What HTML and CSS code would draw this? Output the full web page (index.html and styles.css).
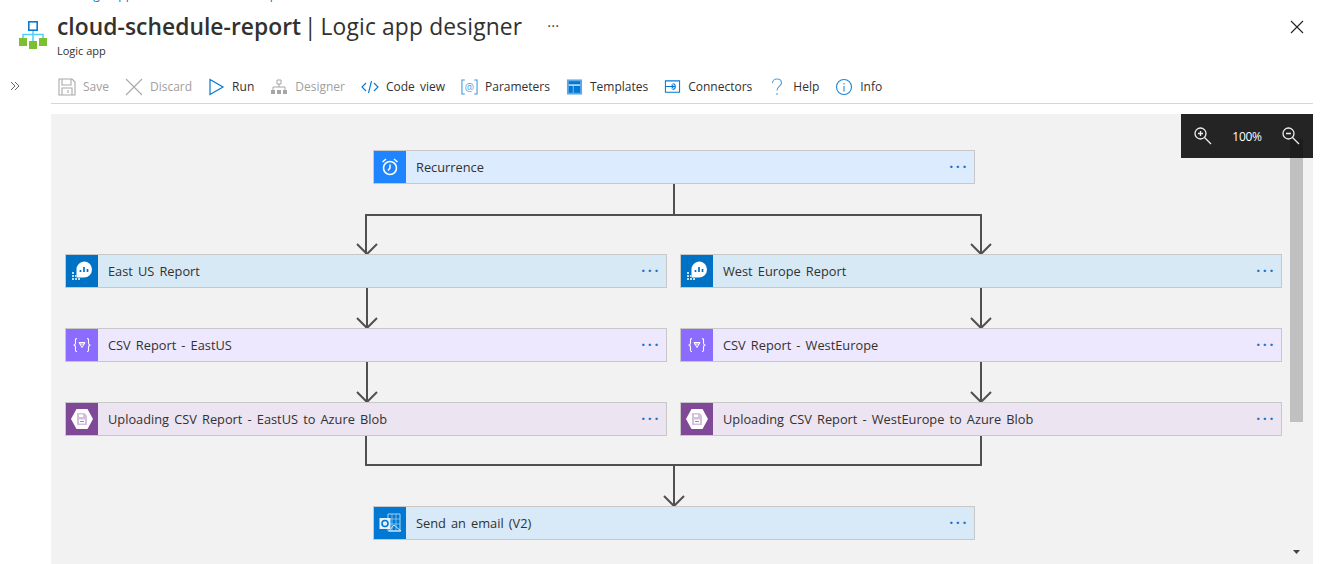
FILE: index.html
```html
<!DOCTYPE html>
<html lang="en">
<head>
<meta charset="utf-8">
<title>cloud-schedule-report | Logic app designer</title>
<link rel="stylesheet" href="styles.css">
</head>
<body>
<div class="crumbs"><div class="crumb-inner"><span>Home</span><span>&gt;</span><span>Logic apps</span><span>&gt;</span><span>cloud-schedule-report</span></div></div>
<header class="head">
  <svg class="app-icon" width="30" height="32" viewBox="0 0 30 32">
    <rect x="10.800" y="3.800" width="8.400" height="8.400" fill="none" stroke="#0b78cf" stroke-width="1.600"/>
    <path d="M15 13v10M5 20v-3.500h20V20" fill="none" stroke="#4fd0f7" stroke-width="1.500"/>
    <rect x="1" y="20" width="8" height="8" fill="#7cbf2f"/>
    <rect x="11" y="23" width="8" height="8" fill="#7cbf2f"/>
    <rect x="21" y="20" width="8" height="8" fill="#7cbf2f"/>
  </svg>
  <div class="head-text">
    <h1 class="title"><b class="title-name">cloud-schedule-report</b> <span class="title-bar">|</span> <span class="title-rest">Logic app designer</span></h1>
    <div class="subtitle">Logic app</div>
  </div>
  <span class="more">···</span>
  <svg class="close" width="14" height="14" viewBox="0 0 14 14"><path d="M1 1l12 12M13 1L1 13" stroke="#222" stroke-width="1.100" fill="none"/></svg>
</header>
<main class="main">
  <aside class="rail">
    <svg width="10" height="10" viewBox="0 0 10 10"><path d="M1 1l4 4-4 4M5 1l4 4-4 4" stroke="#666" fill="none"/></svg>
  </aside>
  <div class="content">
    <nav class="toolbar">
      <span class="tool off"><svg class="ico" viewBox="0 0 18 18"><path d="M1 1h13l3 3v13H1zM4 1v6h9V1M4 17v-7h10v7M10 12v3" fill="none" stroke="#aaa" stroke-width="1.100"/></svg>Save</span>
      <span class="tool off"><svg class="ico" viewBox="0 0 18 18"><path d="M1 1l16 16M17 1L1 17" fill="none" stroke="#aaa" stroke-width="1.100"/></svg>Discard</span>
      <span class="tool"><svg class="ico ico-s" viewBox="0 0 17 18"><path d="M2 1.500l13 7.500-13 7.500z" fill="none" stroke="#0078d4" stroke-width="1.200"/></svg>Run</span>
      <span class="tool off"><svg class="ico" viewBox="0 0 18 18"><path d="M7 2h4v4H7zM9 6v3M3 12V9h12v3" fill="none" stroke="#a6a6a6"/><path d="M1 12h4v4H1zM7 12h4v4H7zM13 12h4v4h-4z" fill="#a6a6a6"/></svg>Designer</span>
      <span class="tool"><svg class="ico" viewBox="0 0 18 18"><path d="M5 5L1 9l4 4M13 5l4 4-4 4M10.500 3L7.500 15" fill="none" stroke="#0078d4" stroke-width="1.100"/></svg>Code view</span>
      <span class="tool"><svg class="ico ico-s" viewBox="0 0 18 18"><path d="M4 1.500H1v15h3M14 1.500h3v15h-3" fill="none" stroke="#3a94dc" stroke-width="1.100"/><text class="at" x="9" y="13">@</text></svg>Parameters</span>
      <span class="tool"><svg class="ico ico-s" viewBox="0 0 18 18"><rect x="1" y="1" width="16" height="16" fill="#5ea9e4"/><path d="M3 3h12v3H3zM3 7.500h4V15H3zM8.500 7.500H15V15H8.500z" fill="#0078d4"/><path d="M3 7h12" stroke="#fff"/></svg>Templates</span>
      <span class="tool"><svg class="ico ico-s" viewBox="0 0 18 18"><path d="M1.500 2.500h15v12h-15zM1.500 8.500h4M12.500 8.500h-8M9 5.500a3 3 0 0 1 0 6M10 8.500l-2-2M10 8.500l-2 2" fill="none" stroke="#0078d4" stroke-width="1.100"/></svg>Connectors</span>
      <span class="tool"><svg class="ico" viewBox="0 0 18 18"><path d="M4.500 5C4.500 2.500 6.500 1 9 1s4.500 1.500 4.500 4C13.500 8 9 8.500 9 12.500M9 15v2" fill="none" stroke="#4a9fe0" stroke-width="1.100"/></svg>Help</span>
      <span class="tool"><svg class="ico" viewBox="0 0 18 18"><circle cx="9" cy="9" r="7.500" fill="none" stroke="#1a85d8" stroke-width="1.100"/><path d="M9 8v5.500M9 5v1.500" stroke="#4a9fe0" stroke-width="1.300" fill="none"/></svg>Info</span>
    </nav>
    <section class="canvas">
      <svg class="wires" width="1262" height="450" viewBox="0 0 1262 450">
        <g fill="none" stroke="#505050" stroke-width="2">
          <path d="M623 70v31M315 140v-39h615v39"/>
          <path d="M306 130l10 10 10-10M920 130l10 10 10-10"/>
          <path d="M316 174v40M930 174v40M306 204l10 10 10-10M920 204l10 10 10-10"/>
          <path d="M316 248v40M930 248v40M306 278l10 10 10-10M920 278l10 10 10-10"/>
          <path d="M315 322v29h615v-29M623 351v41M613 382l10 10 10-10"/>
        </g>
      </svg>

      <div class="node rec col-mid row-0">
        <span class="node-ico"><svg width="20" height="20" viewBox="0 0 20 20"><circle cx="10" cy="11" r="6.500" fill="none" stroke="#fff" stroke-width="1.600"/><path d="M10 7.500V11L8 13.500M2.500 5L6 2M17.500 5L14 2" fill="none" stroke="#fff" stroke-width="1.500"/></svg></span>
        <span class="label">Recurrence</span><span class="dots">···</span>
      </div>

      <div class="node ana col-left row-1">
        <span class="node-ico"><svg width="24" height="24" viewBox="0 0 24 24"><path d="M14 2.500a8 8 0 0 1 0 16H6.500v-8a8 8 0 0 1 7.500-8z" fill="#fff"/><path d="M10.500 13v-2M14 13V8M17.500 13V10" stroke="#0072c6" stroke-width="1.700"/><path d="M2 13h2v2H2zM2 16h2v2H2zM2 19h2v2H2zM5 19h2v2H5zM8 19h2v2H8zM5 16h1.500v2H5z" fill="#bfe0f5"/></svg></span>
        <span class="label">East US Report</span><span class="dots">···</span>
      </div>
      <div class="node ana col-right row-1">
        <span class="node-ico"><svg width="24" height="24" viewBox="0 0 24 24"><path d="M14 2.500a8 8 0 0 1 0 16H6.500v-8a8 8 0 0 1 7.500-8z" fill="#fff"/><path d="M10.500 13v-2M14 13V8M17.500 13V10" stroke="#0072c6" stroke-width="1.700"/><path d="M2 13h2v2H2zM2 16h2v2H2zM2 19h2v2H2zM5 19h2v2H5zM8 19h2v2H8zM5 16h1.500v2H5z" fill="#bfe0f5"/></svg></span>
        <span class="label">West Europe Report</span><span class="dots">···</span>
      </div>

      <div class="node csv col-left row-2">
        <span class="node-ico"><svg width="20" height="20" viewBox="0 0 20 20"><path d="M5 3.500C3 3.500 3.500 5 3.500 7.500S3 10 1.500 10c1.500 0 2 .5 2 2.500s-.5 4 1.500 4M15 3.500c2 0 1.500 1.500 1.500 4s.5 2.500 2 2.500c-1.500 0-2 .5-2 2.500s.5 4-1.500 4" fill="none" stroke="#fff" stroke-width="1.100"/><path d="M7 7.500h6L10 12.500zM7.800 9h4.400" fill="none" stroke="#fff" stroke-width="1"/></svg></span>
        <span class="label">CSV Report - EastUS</span><span class="dots">···</span>
      </div>
      <div class="node csv col-right row-2">
        <span class="node-ico"><svg width="20" height="20" viewBox="0 0 20 20"><path d="M5 3.500C3 3.500 3.500 5 3.500 7.500S3 10 1.500 10c1.500 0 2 .5 2 2.500s-.5 4 1.500 4M15 3.500c2 0 1.500 1.500 1.500 4s.5 2.500 2 2.500c-1.500 0-2 .5-2 2.500s.5 4-1.500 4" fill="none" stroke="#fff" stroke-width="1.100"/><path d="M7 7.500h6L10 12.500zM7.800 9h4.400" fill="none" stroke="#fff" stroke-width="1"/></svg></span>
        <span class="label">CSV Report - WestEurope</span><span class="dots">···</span>
      </div>

      <div class="node blob col-left row-3">
        <span class="node-ico"><svg width="24" height="24" viewBox="0 0 24 24"><path d="M6.500 2h11L23 12l-5.500 10h-11L1 12z" fill="#fff"/><path d="M7 6h7.500L17 8.500V18H7z" fill="#d4c0de"/><path d="M9 7.500h4v2.500H9zM9 12.500h6v4H9z" fill="#fff"/><path d="M10 14.500h4" stroke="#a685b8"/></svg></span>
        <span class="label">Uploading CSV Report - EastUS to Azure Blob</span><span class="dots">···</span>
      </div>
      <div class="node blob col-right row-3">
        <span class="node-ico"><svg width="24" height="24" viewBox="0 0 24 24"><path d="M6.500 2h11L23 12l-5.500 10h-11L1 12z" fill="#fff"/><path d="M7 6h7.500L17 8.500V18H7z" fill="#d4c0de"/><path d="M9 7.500h4v2.500H9zM9 12.500h6v4H9z" fill="#fff"/><path d="M10 14.500h4" stroke="#a685b8"/></svg></span>
        <span class="label">Uploading CSV Report - WestEurope to Azure Blob</span><span class="dots">···</span>
      </div>

      <div class="node mail col-mid row-4">
        <span class="node-ico"><svg width="24" height="24" viewBox="0 0 24 24"><path d="M10 3h12v17H10z" fill="none" stroke="#a9d5f4" stroke-width="1"/><path d="M14 3v17M18 3v17M10 8h12M10 13h12" stroke="#a9d5f4" stroke-width=".7"/><path d="M11 20l5-6 7 6z" fill="none" stroke="#d8ecfa"/><rect x="1.500" y="7" width="11" height="11" fill="#e6f2fb"/><circle cx="7" cy="12.500" r="3" fill="none" stroke="#0078d4" stroke-width="1.600"/></svg></span>
        <span class="label">Send an email (V2)</span><span class="dots">···</span>
      </div>

      <div class="thumb"></div>
      <svg class="down" width="7" height="4" viewBox="0 0 7 4"><path d="M0 0h7L3.500 4z" fill="#444"/></svg>

      <div class="zoombar">
        <svg width="20" height="20" viewBox="0 0 20 20"><circle cx="7.500" cy="7.500" r="5.500" fill="none" stroke="#eee" stroke-width="1.300"/><path d="M11.500 11.500l6.500 6.500M5 7.500h5M7.500 5v5" stroke="#eee" stroke-width="1.300" fill="none"/></svg>
        <span class="pct">100%</span>
        <svg width="20" height="20" viewBox="0 0 20 20"><circle cx="7.500" cy="7.500" r="5.500" fill="none" stroke="#eee" stroke-width="1.300"/><path d="M11.500 11.500l6.500 6.500M5 7.500h5" stroke="#eee" stroke-width="1.300" fill="none"/></svg>
      </div>
    </section>
  </div>
</main>
</body>
</html>
```

FILE: styles.css
```css
* { box-sizing: border-box; }
html, body { margin: 0; height: 100%; overflow: hidden; background: #fff; }
body { font-family: "Open Sans", "Noto Sans", "Liberation Sans", sans-serif; color: #323130; }

.crumbs { height: 3px; overflow: hidden; padding-left: 15px; }
.crumb-inner { display: flex; gap: 12px; margin-top: -12px; font-size: 12px; line-height: 14px; color: #0078d4; white-space: nowrap; }

.head { display: flex; align-items: flex-start; height: 57px; padding-left: 18px; }
.app-icon { margin-top: 15px; flex: none; }
.head-text { margin-left: 9px; margin-top: 8px; }
.title { margin: 0; font-size: 22.800px; line-height: 32px; font-weight: 400; color: #323130; white-space: nowrap; }
.title-name { font-weight: 600; letter-spacing: .05px; margin-right: -3px; }
.title-bar { margin-right: -2px; }
.title-rest { letter-spacing: .16px; }
.subtitle { font-size: 11px; line-height: 14px; margin-top: 1px; color: #323130; }
.more { margin-left: 25px; margin-top: 12px; font-size: 15px; line-height: 20px; color: #444; }
.close { margin-left: auto; margin-right: 24px; margin-top: 17px; }

.main { display: flex; height: 504px; }
.rail { width: 51px; flex: none; padding: 14px 0 0 10px; }
.content { width: 1262px; flex: none; display: flex; flex-direction: column; }

.toolbar { display: flex; align-items: center; gap: 16px; height: 44px; padding: 11px 0 0 7px; border-bottom: 1px solid #d6d6d6; flex: none; }
.tool { display: flex; align-items: center; gap: 7px; font-size: 12px; line-height: 18px; word-spacing: 2px; color: #323130; white-space: nowrap; }
.tool.off { color: #a0a0a0; }
.ico { width: 18px; height: 18px; flex: none; }
.ico-s { width: 17px; }
.at { font-size: 11px; fill: #4a9fe0; text-anchor: middle; font-family: "Open Sans", sans-serif; }

.canvas { position: relative; margin-top: 10px; height: 450px; background: #f2f2f2; overflow: hidden; flex: none; }
.wires { position: absolute; left: 0; top: 0; }

.node { position: absolute; width: 602px; height: 34px; display: flex; align-items: center; border: 1px solid #c8c8c8; }
.col-mid { left: 322px; }
.col-left { left: 14px; }
.col-right { left: 629px; }
.row-0 { top: 36px; }
.row-1 { top: 140px; }
.row-2 { top: 214px; }
.row-3 { top: 288px; }
.row-4 { top: 392px; }
.node-ico { width: 32px; height: 32px; flex: none; display: flex; align-items: center; justify-content: center; }
.label { margin-left: 10px; font-size: 12.800px; word-spacing: 1.800px; color: #323130; white-space: nowrap; flex: 1; }
.dots { margin-right: 5px; font-size: 14px; line-height: 14px; font-weight: 700; letter-spacing: 2.600px; color: #1f72c9; }

.rec { background: #ddebfe; }
.rec .node-ico { background: #1f85ff; }
.ana { background: #d8e9f6; }
.ana .node-ico { background: #0072c6; }
.csv { background: #ede8fe; }
.csv .node-ico { background: #8c6cff; }
.blob { background: #ece4f0; }
.blob .node-ico { background: #804998; }
.mail { background: #d8e9f7; }
.mail .node-ico { background: #0078d4; }

.thumb { position: absolute; left: 1239px; top: 25px; width: 13px; height: 283px; background: #c0c0c0; }
.down { position: absolute; left: 1242px; top: 436px; }

.zoombar { position: absolute; right: 0; top: 0; width: 132px; height: 44px; background: rgba(0, 0, 0, .85); display: flex; align-items: center; justify-content: space-between; padding: 0 12px; color: #fff; }
.pct { font-size: 12px; letter-spacing: -0.3px; }
```
